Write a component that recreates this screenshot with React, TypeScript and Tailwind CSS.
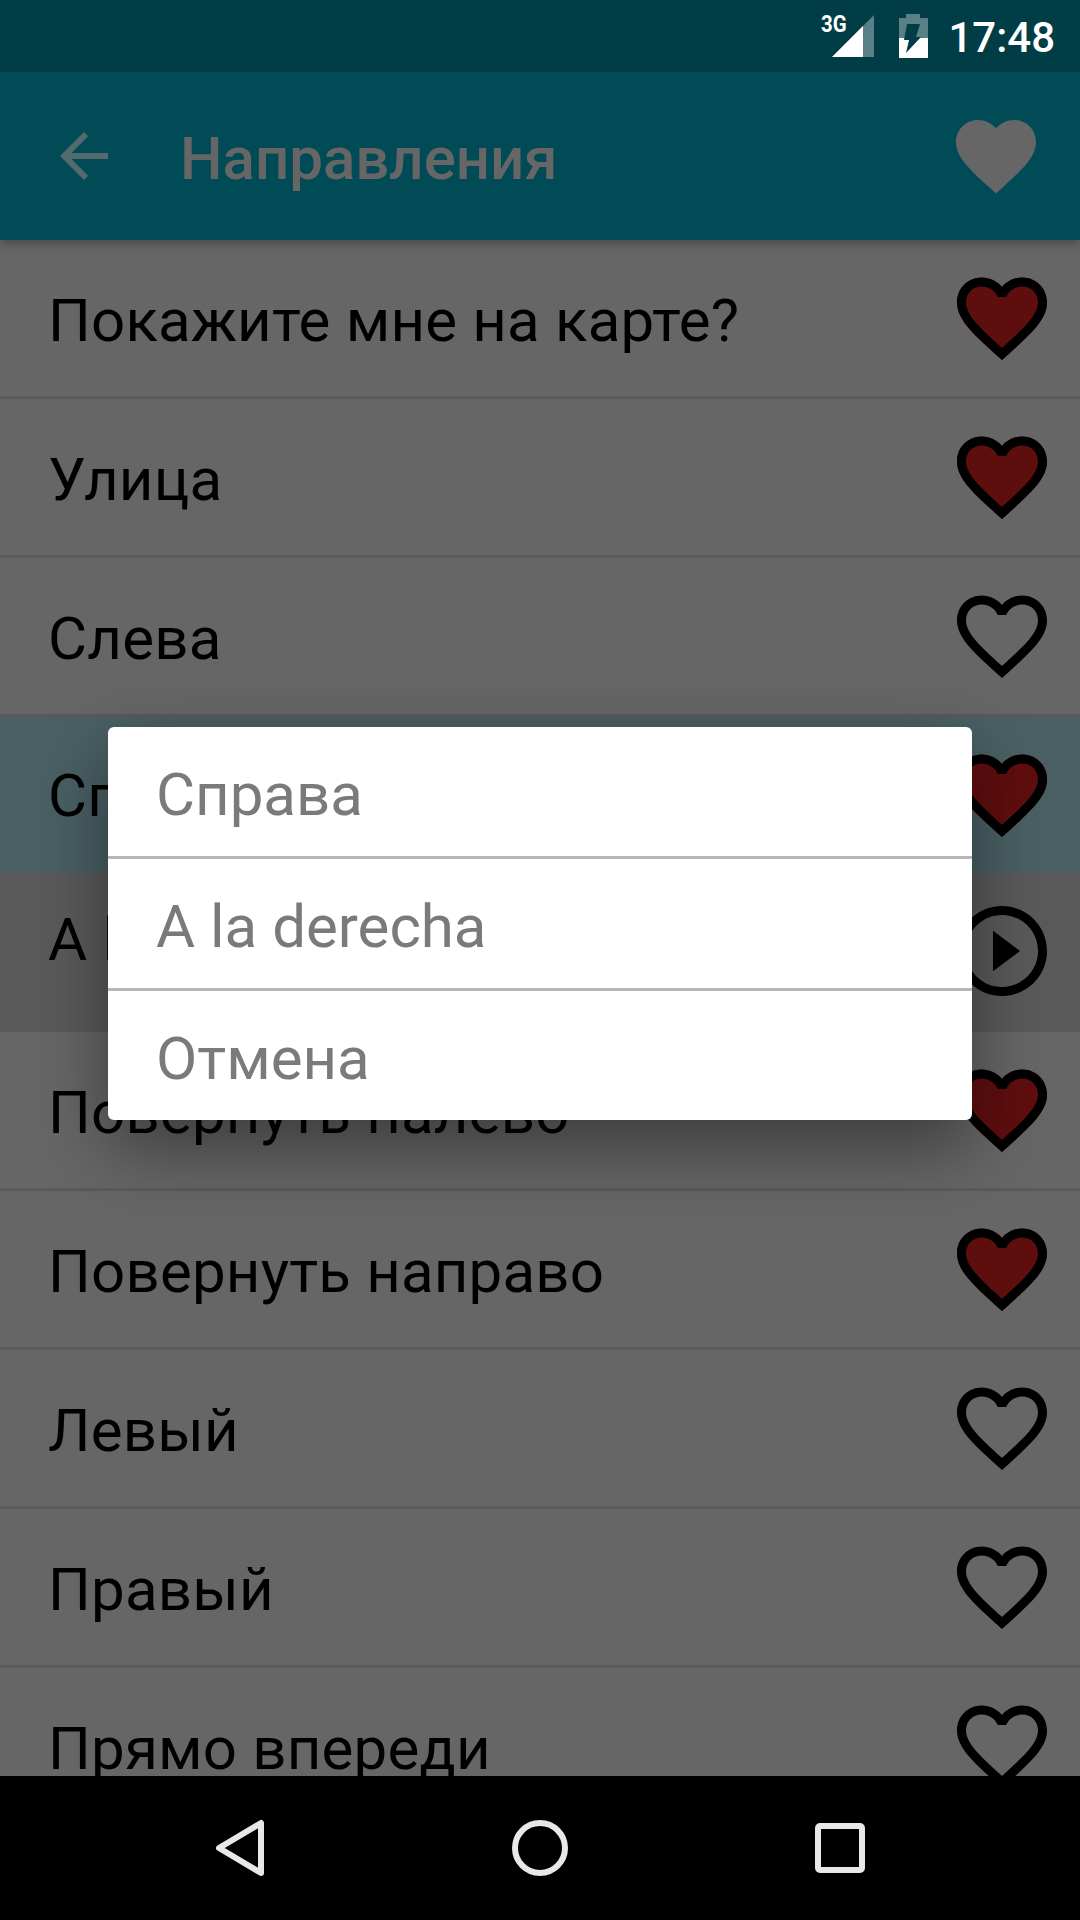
const HEART_BORDER =
  "M16.5 3c-1.74 0-3.41.81-4.5 2.09C10.91 3.81 9.24 3 7.5 3 4.42 3 2 5.42 2 8.5c0 3.78 3.4 6.86 8.55 11.54L12 21.35l1.45-1.32C18.6 15.36 22 12.28 22 8.5 22 5.42 19.58 3 16.5 3zm-4.4 15.55l-.1.1-.1-.1C7.14 14.24 4 11.39 4 8.5 4 6.5 5.5 5 7.5 5c1.54 0 3.04.99 3.57 2.36h1.87C13.46 5.99 14.96 5 16.5 5c2 0 3.5 1.5 3.5 3.5 0 2.89-3.14 5.74-7.9 10.05z";
const HEART_SOLID =
  "M12 21.35l-1.45-1.32C5.4 15.36 2 12.28 2 8.5 2 5.42 4.42 3 7.5 3c1.74 0 3.41.81 4.5 2.09C13.09 3.81 14.76 3 16.5 3 19.58 3 22 5.42 22 8.5c0 3.78-3.4 6.86-8.55 11.54L12 21.35z";
const PLAY =
  "M10 16.5l6-4.5-6-4.5v9zM12 2C6.48 2 2 6.48 2 12s4.48 10 10 10 10-4.48 10-10S17.52 2 12 2zm0 18c-4.41 0-8-3.59-8-8s3.59-8 8-8 8 3.59 8 8-3.59 8-8 8z";

type Kind = "filled" | "empty" | "play";
type Item = { text: string; icon: Kind; row: string; textPos: string };

const plain = "bg-[#666666] h-[159px] border-b-[3px] border-[#5a5a5a]";
const items: Item[] = [
  { text: "Покажите мне на карте?", icon: "filled", row: plain, textPos: "pt-[3px]" },
  { text: "Улица", icon: "filled", row: plain, textPos: "pt-[3px]" },
  { text: "Слева", icon: "empty", row: plain, textPos: "pt-[3px]" },
  { text: "Справа", icon: "filled", row: "bg-[#4a6064] h-[156px]", textPos: "pt-[1px]" },
  { text: "A la derecha", icon: "play", row: "bg-[#5a5a5a] h-[159px]", textPos: "-mt-[11px]" },
  { text: "Повернуть налево", icon: "filled", row: plain, textPos: "pt-[3px]" },
  { text: "Повернуть направо", icon: "filled", row: plain, textPos: "pt-[3px]" },
  { text: "Левый", icon: "empty", row: plain, textPos: "pt-[3px]" },
  { text: "Правый", icon: "empty", row: plain, textPos: "pt-[3px]" },
  { text: "Прямо впереди", icon: "empty", row: plain, textPos: "pt-[3px]" },
];

function RowIcon({ kind }: { kind: Kind }) {
  return (
    <svg viewBox="0 0 24 24" className="w-[108px] h-[108px] shrink-0">
      {kind === "filled" && <path d={HEART_SOLID} fill="#5f0e0e" />}
      <path d={kind === "play" ? PLAY : HEART_BORDER} fill="#000000" />
    </svg>
  );
}

function StatusBar() {
  return (
    <div className="h-[72px] shrink-0 bg-[#003d46] flex items-start justify-end relative z-20">
      <div className="relative w-[54px] h-[72px] shrink-0">
        <span className="absolute left-[1px] top-[11px] text-[24px] leading-[26px] font-bold text-white origin-left scale-x-[0.85] [font-family:Roboto,sans-serif]">
          3G
        </span>
        <svg viewBox="0 0 54 72" className="absolute inset-0 w-[54px] h-[72px]">
          <path d="M12 57 L54 15 V57 Z" fill="#ffffff" fillOpacity="0.35" />
          <path d="M12 57 L43 26 V57 Z" fill="#ffffff" />
        </svg>
      </div>
      <svg viewBox="0 0 29 44" className="w-[29px] h-[44px] ml-[25px] mt-[14px] shrink-0">
        <path d="M7 0 H21 V4 H29 V24 H0 V4 H7 Z" fill="#ffffff" fillOpacity="0.35" />
        <path d="M0 24 H29 V44 H0 Z" fill="#ffffff" />
        <path d="M8 10 L21 10 L17 23 L22 23 L7 39 L10 26 L5 26 Z" fill="#003d46" />
      </svg>
      <span className="ml-[20px] mr-[25px] text-[42px] leading-[72px] pt-[2px] font-medium text-white [font-family:Roboto,sans-serif]">
        17:48
      </span>
    </div>
  );
}

function Toolbar() {
  return (
    <div className="h-[168px] shrink-0 bg-[#014b57] flex items-center pl-[48px] pr-[36px] relative z-10 shadow-[0_3px_9px_rgba(0,0,0,0.3)]">
      <svg viewBox="0 0 24 24" className="w-[72px] h-[72px] shrink-0">
        <path d="M20 11H7.83l5.59-5.59L12 4l-8 8 8 8 1.41-1.41L7.83 13H20v-2z" fill="#536b6f" />
      </svg>
      <span className="ml-[60px] pt-[5px] flex-1 text-[60px] leading-[72px] font-medium text-[#666666] [font-family:Roboto,sans-serif]">
        Направления
      </span>
      <svg viewBox="0 0 24 24" className="w-[96px] h-[96px] shrink-0">
        <path d={HEART_SOLID} fill="#666666" />
      </svg>
    </div>
  );
}

function NavBar() {
  return (
    <div className="h-[144px] shrink-0 bg-black relative z-10 flex items-center">
      <svg viewBox="0 0 56 64" className="w-[56px] h-[64px] ml-[212px] shrink-0">
        <path
          d="M49 7 V57 L7 32 Z"
          fill="none"
          stroke="#e8e8e8"
          strokeWidth="6"
          strokeLinejoin="round"
        />
      </svg>
      <svg viewBox="0 0 56 56" className="w-[56px] h-[56px] ml-[244px] shrink-0">
        <circle cx="28" cy="28" r="25" fill="none" stroke="#e8e8e8" strokeWidth="6" />
      </svg>
      <svg viewBox="0 0 50 50" className="w-[50px] h-[50px] ml-[247px] shrink-0">
        <rect x="3" y="3" width="44" height="44" rx="2" fill="none" stroke="#e8e8e8" strokeWidth="6" />
      </svg>
    </div>
  );
}

function Dialog() {
  const opts = ["Справа", "A la derecha", "Отмена"];
  return (
    <div className="absolute left-[108px] top-[727px] w-[864px] bg-white rounded-[6px] shadow-[0_27px_72px_rgba(0,0,0,0.42)] z-30">
      {opts.map((o, i) => (
        <div
          key={o}
          className={
            i < 2
              ? "h-[132px] pt-[6px] pl-[48px] flex items-center border-b-[3px] border-[#b6b6b6] text-[60px] text-[#7a7a7a] [font-family:Roboto,sans-serif]"
              : "h-[129px] pt-[6px] pl-[48px] flex items-center text-[60px] text-[#7a7a7a] [font-family:Roboto,sans-serif]"
          }
        >
          {o}
        </div>
      ))}
    </div>
  );
}

export default function App() {
  return (
    <div className="relative w-[1080px] h-[1920px] overflow-hidden flex flex-col bg-[#666666]">
      <StatusBar />
      <Toolbar />
      <div className="flex-1 overflow-hidden">
        {items.map((it) => (
          <div key={it.text} className={`${it.row} pl-[48px] pr-[24px] flex items-start justify-between`}>
            <span className={`${it.textPos} text-[60px] leading-[156px] tracking-[0.2px] text-black [font-family:Roboto,sans-serif]`}>{it.text}</span>
            <div className="h-[156px] flex items-center">
              <RowIcon kind={it.icon} />
            </div>
          </div>
        ))}
      </div>
      <NavBar />
      <Dialog />
    </div>
  );
}
